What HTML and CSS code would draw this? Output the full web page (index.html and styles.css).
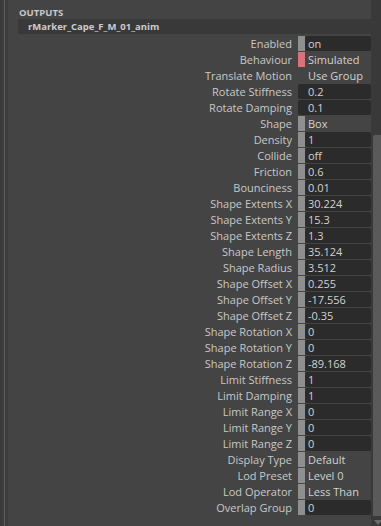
FILE: index.html
```html
<!DOCTYPE html>
<html lang="en">
<head>
    <meta charset="UTF-8">
    <title>Attribute Editor</title>
    <link rel="stylesheet" href="styles.css">
</head>
<body>
    <div class="editor">
        <div class="gutter"></div>
        <main class="panel">
            <div class="section-title">OUTPUTS</div>
            <div class="node-bar">rMarker_Cape_F_M_01_anim</div>
            <div class="attrs">
                <div class="row"><span class="label">Enabled</span><span class="swatch"></span><span class="field">on</span></div>
                <div class="row"><span class="label">Behaviour</span><span class="swatch pink"></span><span class="field plain">Simulated</span></div>
                <div class="row"><span class="label">Translate Motion</span><span class="swatch none"></span><span class="field plain">Use Group</span></div>
                <div class="row"><span class="label">Rotate Stiffness</span><span class="field wide">0.2</span></div>
                <div class="row"><span class="label">Rotate Damping</span><span class="field wide">0.1</span></div>
                <div class="row"><span class="label">Shape</span><span class="swatch"></span><span class="field plain">Box</span></div>
                <div class="row"><span class="label">Density</span><span class="swatch"></span><span class="field">1</span></div>
                <div class="row"><span class="label">Collide</span><span class="swatch"></span><span class="field">off</span></div>
                <div class="row"><span class="label">Friction</span><span class="swatch"></span><span class="field">0.6</span></div>
                <div class="row"><span class="label">Bounciness</span><span class="swatch"></span><span class="field">0.01</span></div>
                <div class="row"><span class="label">Shape Extents X</span><span class="swatch"></span><span class="field">30.224</span></div>
                <div class="row"><span class="label">Shape Extents Y</span><span class="swatch"></span><span class="field">15.3</span></div>
                <div class="row"><span class="label">Shape Extents Z</span><span class="swatch"></span><span class="field">1.3</span></div>
                <div class="row"><span class="label">Shape Length</span><span class="swatch"></span><span class="field">35.124</span></div>
                <div class="row"><span class="label">Shape Radius</span><span class="swatch"></span><span class="field">3.512</span></div>
                <div class="row"><span class="label">Shape Offset X</span><span class="swatch"></span><span class="field">0.255</span></div>
                <div class="row"><span class="label">Shape Offset Y</span><span class="swatch"></span><span class="field">-17.556</span></div>
                <div class="row"><span class="label">Shape Offset Z</span><span class="swatch"></span><span class="field">-0.35</span></div>
                <div class="row"><span class="label">Shape Rotation X</span><span class="swatch"></span><span class="field">0</span></div>
                <div class="row"><span class="label">Shape Rotation Y</span><span class="swatch"></span><span class="field">0</span></div>
                <div class="row"><span class="label">Shape Rotation Z</span><span class="swatch"></span><span class="field">-89.168</span></div>
                <div class="row"><span class="label">Limit Stiffness</span><span class="swatch"></span><span class="field">1</span></div>
                <div class="row"><span class="label">Limit Damping</span><span class="swatch"></span><span class="field">1</span></div>
                <div class="row"><span class="label">Limit Range X</span><span class="swatch"></span><span class="field">0</span></div>
                <div class="row"><span class="label">Limit Range Y</span><span class="swatch"></span><span class="field">0</span></div>
                <div class="row"><span class="label">Limit Range Z</span><span class="swatch"></span><span class="field">0</span></div>
                <div class="row"><span class="label">Display Type</span><span class="swatch"></span><span class="field plain">Default</span></div>
                <div class="row"><span class="label">Lod Preset</span><span class="swatch"></span><span class="field plain">Level 0</span></div>
                <div class="row"><span class="label">Lod Operator</span><span class="swatch"></span><span class="field plain">Less Than</span></div>
                <div class="row"><span class="label">Overlap Group</span><span class="swatch"></span><span class="field">0</span></div>
            </div>
        </main>
        <div class="scrollbar">
            <div class="thumb"></div>
            <div class="arrow"></div>
        </div>
    </div>
</body>
</html>
```
FILE: styles.css
```css
body {
    margin: 0;
    background-color: #444444;
    font-family: "Open Sans", "Noto Sans", sans-serif;
    font-size: 11px;
    color: #c8c8c8;
}
.editor {
    display: flex;
    height: 526px;
    overflow: hidden;
}
.gutter {
    flex: none;
    width: 2px;
    border-left: 2px solid #3a3a3a;
    border-right: 1px solid #5c5c5c;
    background-color: #3d3d3d;
    box-shadow: 3px 0 0 #3d3d3d;
    margin-right: 4px;
}
.panel {
    flex: 1;
    padding-left: 9px;
}
.section-title {
    height: 19px;
    line-height: 25px;
    font-size: 9.5px;
    font-weight: bold;
    color: #c8c8c8;
    padding-left: 1px;
}
.node-bar {
    height: 15px;
    line-height: 15px;
    background-color: #393939;
    font-size: 9.5px;
    font-weight: bold;
    color: #cdcdcd;
    padding-left: 10px;
    margin-bottom: 2px;
}
.row {
    display: flex;
    height: 15px;
    margin-bottom: 1px;
}
.label {
    width: 274px;
    text-align: right;
    line-height: 15px;
    padding-right: 6px;
    flex: none;
}
.swatch {
    width: 7px;
    background-color: #8f8f8f;
    flex: none;
}
.swatch.pink {
    background-color: #d9737b;
}
.swatch.none {
    background-color: transparent;
}
.field {
    flex: 1;
    background-color: #2b2b2b;
    border-radius: 2px;
    line-height: 15px;
    padding-left: 3px;
    color: #d2d2d2;
}
.field.wide {
    padding-left: 10px;
}
.field.plain {
    background-color: transparent;
}
.scrollbar {
    width: 10px;
    background-color: #393939;
    position: relative;
    flex: none;
}
.thumb {
    position: absolute;
    left: 2px;
    right: 0;
    top: 135px;
    height: 381px;
    background-color: #5a5a5a;
    border-radius: 2px 0 0 0;
}
.arrow {
    position: absolute;
    left: 3px;
    bottom: 1px;
    width: 0;
    height: 0;
    border-left: 4px solid transparent;
    border-right: 4px solid transparent;
    border-top: 5px solid #6a6a6a;
}
```
